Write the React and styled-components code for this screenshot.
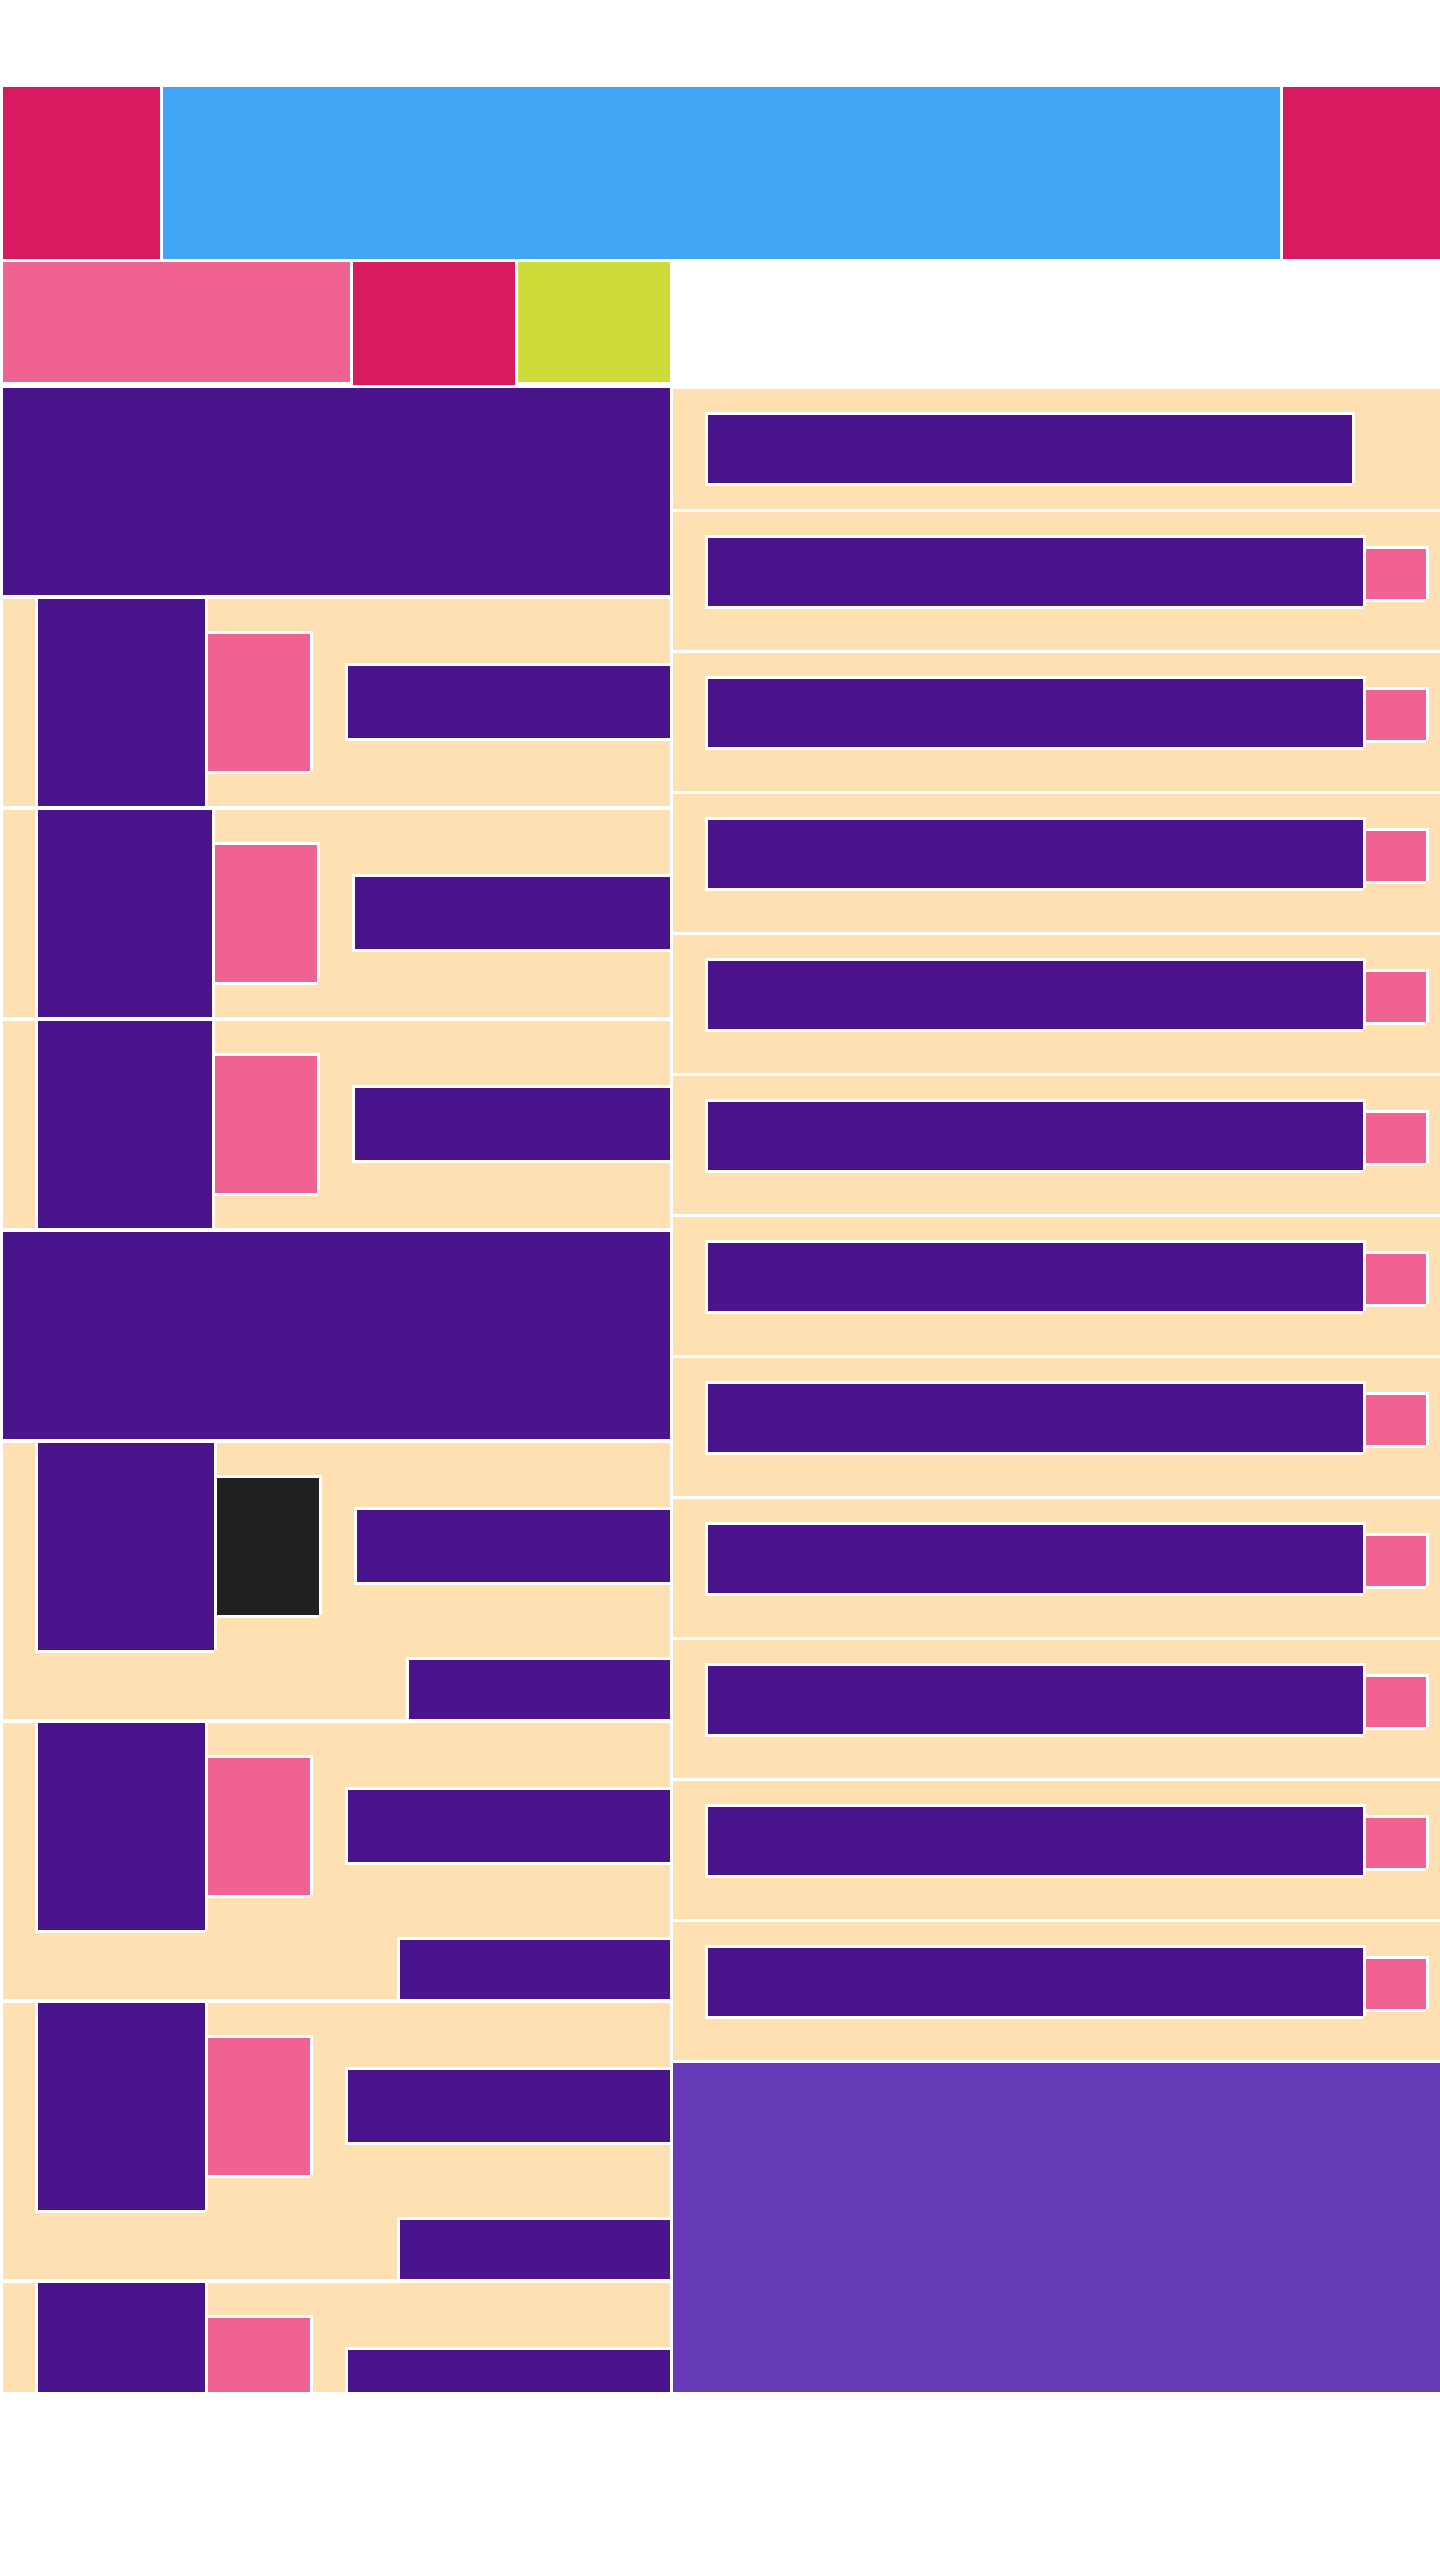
import React from "react";
import styled, { createGlobalStyle, css } from "styled-components";

const purple = "#4A148C";
const cream = "#FFE0B2";
const pink = "#F06292";
const crimson = "#D81B60";

const GlobalStyle = createGlobalStyle`
  * {
    box-sizing: border-box;
  }
  body {
    margin: 0;
    background: #fff;
    font-family: "Liberation Sans", Arial, sans-serif;
  }
`;

// white 3px frame round a block, bottom-right corner left open
const frame = css`
  box-shadow: -3px -3px 0 #fff, 3px -3px 0 #fff, -3px 3px 0 #fff,
    3px 0 0 #fff, 0 3px 0 #fff;
`;

const Page = styled.div`
  width: 1440px;
  padding: 87px 0 0 3px;
`;

const TopBar = styled.div`
  display: grid;
  grid-template-columns: 157px 1fr 157px;
  gap: 3px;
  height: 172px;
`;

const TopTile = styled.div`
  background: ${(props) => props.$color};
`;

const SubBar = styled.div`
  display: flex;
  align-items: flex-start;
  gap: 3px;
  margin-top: 3px;
`;

const SubTile = styled.div`
  width: ${(props) => props.$w}px;
  height: ${(props) => props.$h || 120}px;
  background: ${(props) => props.$color};
`;

const Main = styled.div`
  display: grid;
  grid-template-columns: 667px 767px;
  gap: 3px;
  margin-top: 3px;
  height: 2004px;
  overflow: hidden;
`;

const LeftCol = styled.div`
  display: flex;
  flex-direction: column;
  gap: 4px;
`;

const Banner = styled.div`
  flex-shrink: 0;
  height: 207px;
  background: ${purple};
`;

const Item = styled.div`
  flex-shrink: 0;
  display: flex;
  align-items: flex-start;
  height: ${(props) => (props.$tall ? 276 : 207)}px;
  padding-left: 35px;
  background: ${cream};
`;

const Thumb = styled.div`
  ${frame};
  flex-shrink: 0;
  width: ${(props) => props.$w}px;
  height: 207px;
  background: ${purple};
`;

const ItemBody = styled.div`
  flex: 1;
  display: flex;
  flex-direction: column;
  margin-left: 3px;
`;

const ItemRow = styled.div`
  display: flex;
  align-items: flex-start;
  height: 207px;
`;

const Badge = styled.div`
  ${frame};
  flex-shrink: 0;
  width: 102px;
  height: 137px;
  margin-top: 35px;
  background: ${(props) => props.$color};
`;

const ItemBar = styled.div`
  ${frame};
  flex: 1;
  height: 72px;
  margin: 67px 0 0 38px;
  background: ${purple};
`;

const ItemFoot = styled.div`
  ${frame};
  height: 59px;
  margin: 10px 0 0 192px;
  background: ${purple};
`;

const RightCol = styled.div`
  display: flex;
  flex-direction: column;
  gap: 3px;
  padding-top: 1px;
`;

const Entry = styled.div`
  flex-shrink: 0;
  display: flex;
  align-items: flex-start;
  height: ${(props) => (props.$first ? 120 : 138)}px;
  padding: 26px 14px 0 35px;
  background: ${cream};
`;

const EntryBar = styled.div`
  ${frame};
  width: ${(props) => props.$w}px;
  height: 68px;
  background: ${purple};
`;

const Tag = styled.div`
  ${frame};
  width: 60px;
  height: 50px;
  margin: 11px 0 0 3px;
  background: ${pink};
`;

const Panel = styled.div`
  flex-shrink: 0;
  height: 340px;
  background: #673AB7;
`;

const topItems = [
  { w: 167, color: pink },
  { w: 174, color: pink },
  { w: 174, color: pink },
];

const bottomItems = [
  { w: 176, color: "#212121" },
  { w: 167, color: pink },
  { w: 167, color: pink },
  { w: 167, color: pink },
];

function ListItem({ w, color, tall }) {
  return (
    <Item $tall={tall}>
      <Thumb $w={w} />
      <ItemBody>
        <ItemRow>
          <Badge $color={color} />
          <ItemBar />
        </ItemRow>
        {tall && <ItemFoot />}
      </ItemBody>
    </Item>
  );
}

export default function App() {
  const entries = Array.from({ length: 11 });

  return (
    <>
      <GlobalStyle />
      <Page>
        <TopBar>
          <TopTile $color={crimson} />
          <TopTile $color="#42A5F5" />
          <TopTile $color={crimson} />
        </TopBar>
        <SubBar>
          <SubTile $w={347} $color={pink} />
          <SubTile $w={162} $h={123} $color={crimson} />
          <SubTile $w={152} $color="#CDDC39" />
        </SubBar>
        <Main>
          <LeftCol>
            <Banner />
            {topItems.map((it, i) => (
              <ListItem key={"a" + i} w={it.w} color={it.color} />
            ))}
            <Banner />
            {bottomItems.map((it, i) => (
              <ListItem key={"b" + i} w={it.w} color={it.color} tall />
            ))}
          </LeftCol>
          <RightCol>
            <Entry $first>
              <EntryBar $w={644} />
            </Entry>
            {entries.map((_, i) => (
              <Entry key={i}>
                <EntryBar $w={655} />
                <Tag />
              </Entry>
            ))}
            <Panel />
          </RightCol>
        </Main>
      </Page>
    </>
  );
}
